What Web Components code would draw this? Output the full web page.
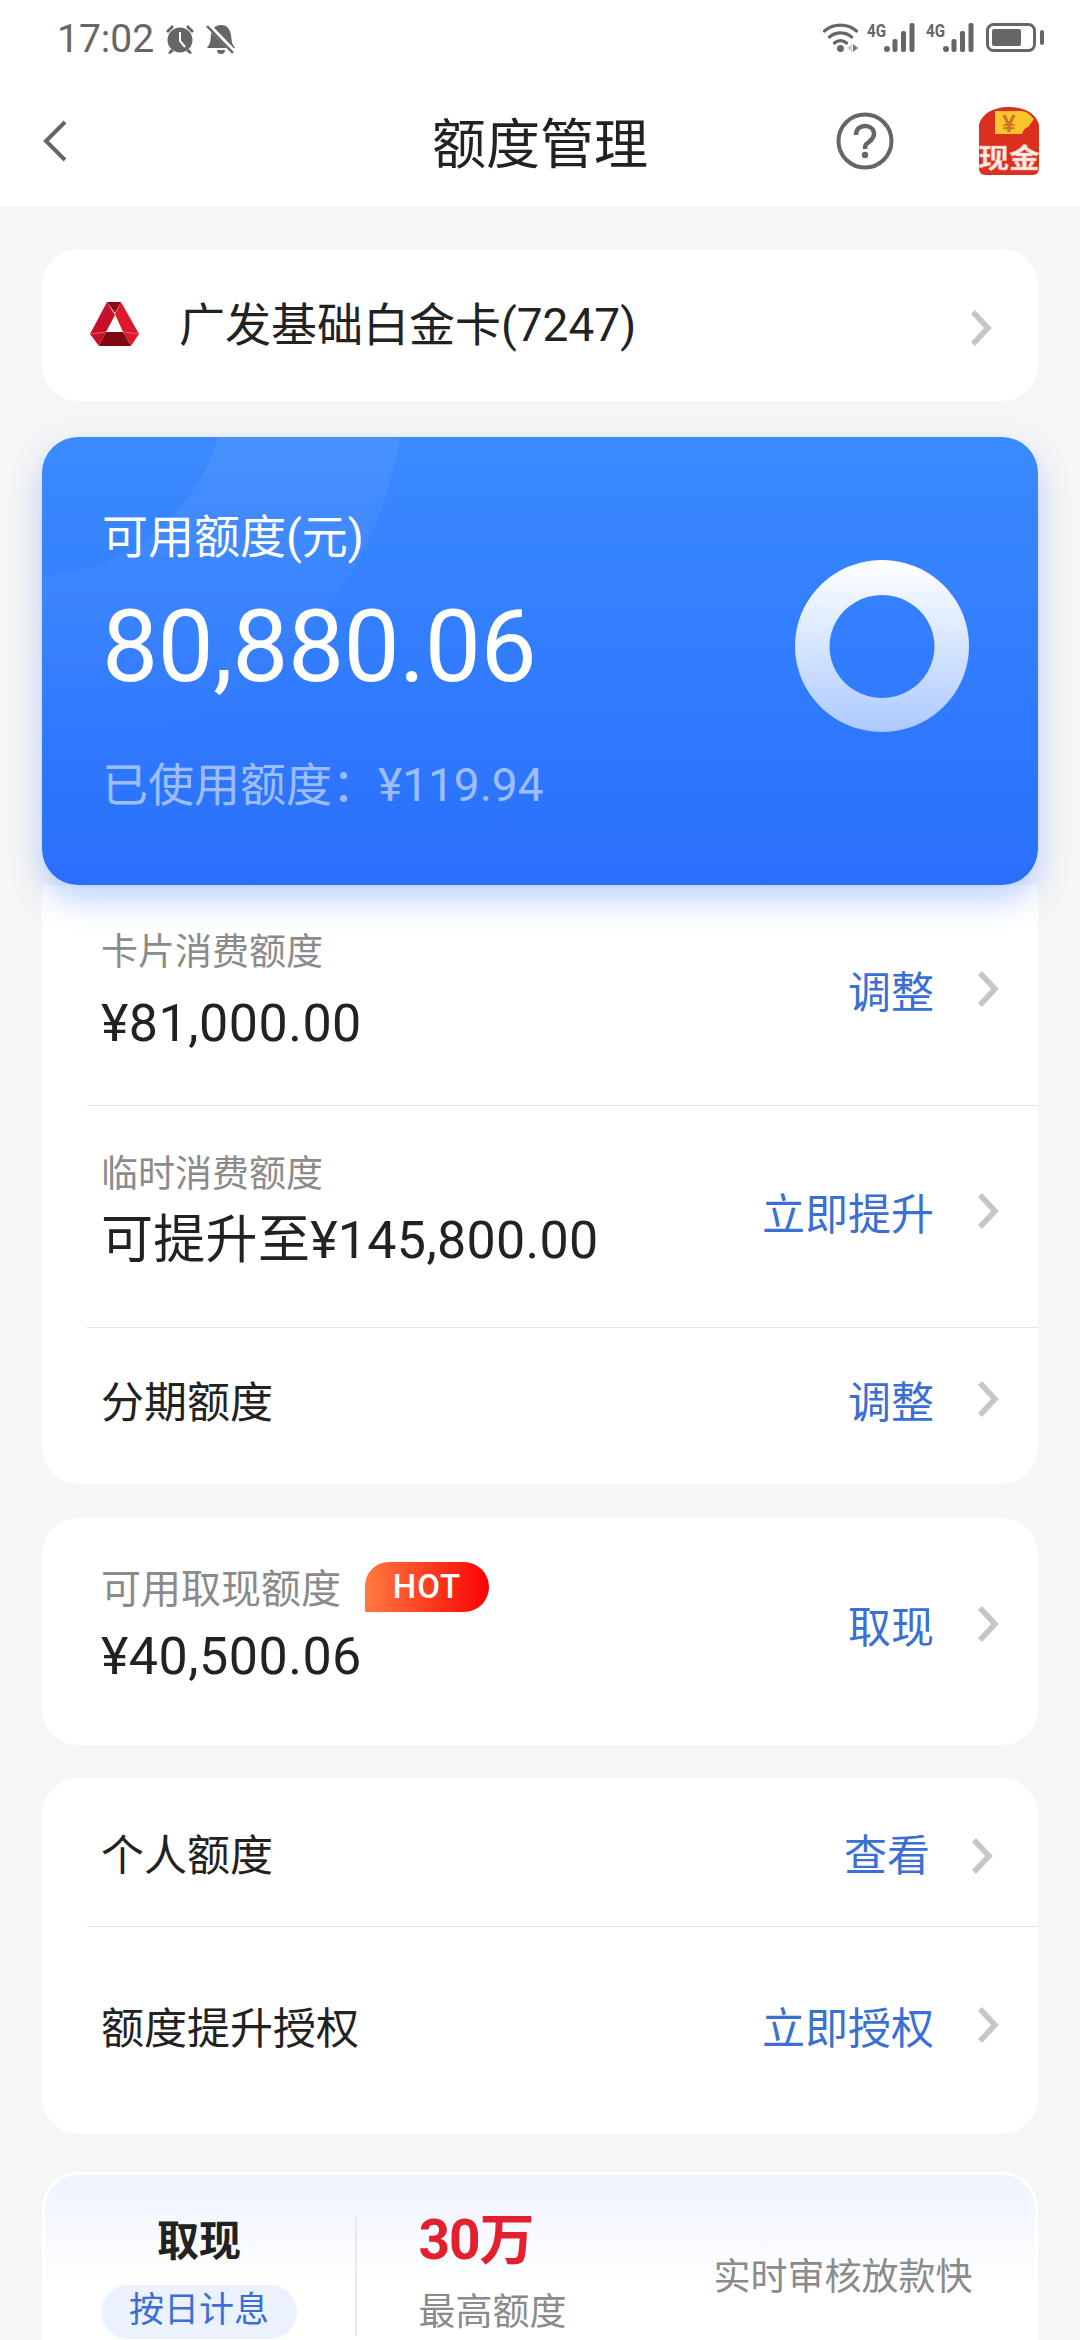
<!DOCTYPE html>
<html lang="zh"><head><meta charset="utf-8"><title>额度管理</title>
<style>
html,body{margin:0;padding:0;background:#f6f6f6}
body{width:1080px;height:2340px;overflow:hidden;font-family:Roboto,"Noto Sans CJK SC",sans-serif;color:#222}
</style></head><body>
<quota-page>
  <status-bar slot="top" time="17:02"></status-bar>
  <nav-bar slot="top" heading="额度管理"></nav-bar>
  <card-picker name="广发基础白金卡(7247)"></card-picker>
  <credit-hero label="可用额度(元)" amount="80,880.06" used="已使用额度：¥119.94"></credit-hero>
  <quota-card flat>
    <quota-row height="220" up="6" tm="5" gap="15" label="卡片消费额度" value="¥81,000.00" action="调整"></quota-row>
    <quota-row divided height="222" up="6" tm="0" gap="10" spacing="0.3" label="临时消费额度" value="可提升至¥145,800.00" action="立即提升"></quota-row>
    <quota-row divided height="157" up="7.5" title="分期额度" action="调整"></quota-row>
  </quota-card>
  <quota-card style="margin-top:34px">
    <quota-row height="227" up="7.5" tm="4.5" gap="11.5" lsize="40" label="可用取现额度" value="¥40,500.06" action="取现" hot></quota-row>
  </quota-card>
  <quota-card style="margin-top:33px">
    <quota-row height="148" chev="8" title="个人额度" action="查看" inset></quota-row>
    <quota-row divided height="208" up="6" title="额度提升授权" action="立即授权"></quota-row>
  </quota-card>
  <promo-banner></promo-banner>
</quota-page>
<script>
const CJK='Roboto,"Noto Sans CJK SC",sans-serif';
class Base extends HTMLElement{
  render(html){ if(!this.shadowRoot) this.attachShadow({mode:'open'}); this.shadowRoot.innerHTML=html; }
  a(n,d=''){ return this.hasAttribute(n)?this.getAttribute(n):d; }
}
class QuotaPage extends Base{connectedCallback(){this.render(`<style>
:host{display:flex;flex-direction:column;height:2340px;overflow:hidden}
header{background:#fff;display:flex;flex-direction:column}
main{display:flex;flex-direction:column;padding:42px 42px 0}
</style><header><slot name="top"></slot></header><main><slot></slot></main>`)}}
class StatusBar extends Base{connectedCallback(){
const g=(m)=>`<span class="g" style="margin-left:${m}px">4G</span><svg width="31" height="29" viewBox="0 0 31 29"><g fill="#666"><rect x="0" y="23" width="6" height="6" rx="3"/><rect x="8.500" y="16" width="5" height="13" rx="2"/><rect x="17" y="8" width="5" height="21" rx="2"/><rect x="25.500" y="0" width="5" height="29" rx="2"/></g></svg>`;
this.render(`<style>
:host{display:flex;align-items:center;justify-content:space-between;height:78px;padding:0 36px 0 57px;color:#666;font:400 39px Roboto,sans-serif}
.l,.r{display:flex;align-items:center}
.l{gap:9px}.l span{margin-right:1px}
.g{width:17px;font:700 16px/14px Roboto,sans-serif;align-self:flex-start;transform:scale(.95,1.15);transform-origin:0 0;white-space:nowrap}
.r{height:29px;margin-top:-3px}
</style>
<div class="l"><span>${this.a('time')}</span>
<svg width="32" height="32" viewBox="0 0 32 32"><g fill="#666"><circle cx="16" cy="17" r="12.500"/><path d="M2 8 8 2l2 2-6 6zM30 8l-6-6-2 2 6 6zM7 26l-3 4 2 1 4-3zM25 26l3 4-2 1-4-3z"/></g><path d="M16 9v9l5 6" fill="none" stroke="#fff" stroke-width="2"/></svg>
<svg width="32" height="32" viewBox="0 0 32 32"><path d="M16 2c6 0 9 4 10 10l1 8 3 5H2l3-5 1-8C7 6 10 2 16 2zM12 27h8a4 4 0 0 1-8 0z" fill="#666"/><path d="M3 2l26 27" stroke="#fff" stroke-width="5"/><path d="M2 3l26 27" stroke="#666" stroke-width="2.500"/></svg></div>
<div class="r">
<svg width="35" height="29" viewBox="0 0 35 29" fill="none"><path d="M1.500 8a25 25 0 0 1 32 0M6.500 14a17 17 0 0 1 22 0M11.500 20a9 9 0 0 1 12 0" stroke="#666" stroke-width="3.200" stroke-linecap="round"/><circle cx="17.500" cy="25.500" r="3.500" fill="#666"/><path d="M24 25l5-4v8z" fill="#ccc"/><path d="M30 21l5 4-5 4z" fill="#777"/></svg>
${g(9)}${g(11)}
<svg style="margin-left:12px" width="58" height="29" viewBox="0 0 58 29" fill="none"><rect x="1.500" y="1.500" width="47" height="26" rx="6" stroke="#666" stroke-width="3"/><rect x="6" y="6" width="29" height="17" rx="2" fill="#666"/><rect x="54" y="7" width="4" height="15" rx="2" fill="#666"/></svg>
</div>`)}}
class NavBar extends Base{connectedCallback(){this.render(`<style>
:host{display:grid;grid-template-columns:1fr auto 1fr;align-items:center;box-sizing:border-box;height:129px;padding:0 42px 4px;font:400 54px ${CJK};color:#222}
.r{display:flex;justify-content:flex-end;align-items:center;gap:82px}
svg{display:block}
</style>
<svg width="26" height="42" viewBox="0 0 26 42" fill="none"><path d="M23 2 4 21l19 19" stroke="#666" stroke-width="4"/></svg>
<div>${this.a('heading')}</div>
<div class="r">
<svg width="58" height="58" viewBox="0 0 58 58" fill="none"><circle cx="29" cy="29" r="26.500" stroke="#666" stroke-width="4"/><path d="M20 23c0-6 4-9 9-9s9 3 9 8c0 4-3 6-5 8-3 2-4 3-4 7" stroke="#666" stroke-width="4.500"/><circle cx="29" cy="43" r="3.200" fill="#666"/></svg>
<svg width="66" height="68" viewBox="0 0 66 68" style="margin-right:-4px"><path d="M3 18C5 8 16 0 33 0s28 8 30 18v44a6 6 0 0 1-6 6H9a6 6 0 0 1-6-6z" fill="#d9301f"/><path d="M19 4h25c7 0 10 4 14 8l-6 8c-3 1-5 3-6 7H19z" fill="#f8c62c"/><text x="33" y="25" text-anchor="middle" font-size="24" font-weight="700" fill="#d2702a" font-family="Liberation Sans,sans-serif">¥</text><text transform="scale(1.14,1)" x="29" y="61" text-anchor="middle" font-size="27" font-weight="700" fill="#fdeee8" stroke="#f4a898" stroke-width=".5" font-family="Noto Sans CJK SC,sans-serif">现金</text></svg>
</div>`)}}
class Chevron extends Base{connectedCallback(){this.render(`<style>:host{display:block;width:22px;height:36px}svg{display:block}</style><svg width="22" height="36" viewBox="0 0 22 36" fill="none"><path d="M3 2l15 16L3 34" stroke="#c6c6c6" stroke-width="5.500"/></svg>`)}}
class CardPicker extends Base{connectedCallback(){this.render(`<style>
:host{display:flex;align-items:center;height:152px;padding:0 46px 0 48px;background:#fff;border-radius:36px;font:400 46px ${CJK};color:#222;box-sizing:border-box}
svg{display:block;margin-right:39px;margin-top:-2px;flex:none}
span{flex:1;margin-top:-9px}
ui-chevron{margin-top:6px}
</style>
<svg width="50" height="44" viewBox="0 0 50 44"><polygon points="31,0 49,32 41,44 33,30 25,12" fill="#dc1a2c"/><polygon points="17,0 25,13 16,30 9,44 0,32" fill="#c5122a"/><polygon points="17,0 31,0 25,11" fill="#8d0a15"/><polygon points="16,30 33,30 41,44 9,44" fill="#7d0811"/><polygon points="25,20 33,30 16,30" fill="#fff"/><path d="M0 32 16 30M49 32 33 30" stroke="#f25a62" stroke-width="1"/></svg>
<span>${this.a('name')}</span><ui-chevron></ui-chevron>`)}}
class CreditHero extends Base{connectedCallback(){this.render(`<style>
:host{display:flex;align-items:flex-start;justify-content:space-between;position:relative;z-index:1;height:448px;margin-top:36px;padding:72px 69px 0 60px;box-sizing:border-box;border-radius:36px;color:#fff;
background:linear-gradient(#3a8aff,#2a6ffc);box-shadow:0 14px 32px rgba(43,112,251,.32);font-family:${CJK}}
.decor{position:absolute;inset:0;border-radius:36px;overflow:hidden}
.decor svg{position:absolute;left:0;top:0}
.txt{position:relative;display:flex;flex-direction:column}
.lab{font-size:46px;line-height:56px;height:56px}
.amt{font-size:100px;line-height:110px;margin-top:27px;letter-spacing:-.6px}
.use{font-size:46px;line-height:56px;margin-top:55px;color:rgba(255,255,255,.55)}
.ring{position:relative;display:block;margin-top:51px}
</style>
<div class="decor"><svg width="996" height="448" viewBox="0 0 996 448"><defs>
<linearGradient id="d" x1="0" y1="0" x2="0" y2="1"><stop offset="0" stop-color="#fff" stop-opacity=".16"/><stop offset="1" stop-color="#fff" stop-opacity="0"/></linearGradient></defs>
<path fill-rule="evenodd" fill="url(#d)" d="M-12-431a374 374 0 1 0 .01 0zM-12-254a197 197 0 1 0 .01 0z"/></svg></div>
<div class="txt"><div class="lab">${this.a('label')}</div><div class="amt">${this.a('amount')}</div><div class="use">${this.a('used')}</div></div>
<svg class="ring" width="174" height="172" viewBox="0 0 174 172"><defs><linearGradient id="r" x1="0" y1="0" x2="0" y2="1"><stop offset="0" stop-color="#fff"/><stop offset="1" stop-color="#fff" stop-opacity=".6"/></linearGradient></defs>
<path fill="url(#r)" fill-rule="evenodd" d="M87 0a87 86 0 1 0 .01 0zM87 35a52.500 51.500 0 1 1-.01 0z"/></svg>`)}}
class QuotaCard extends Base{connectedCallback(){const flat=this.hasAttribute('flat');this.render(`<style>
:host{display:flex;flex-direction:column;background:#fff;border-radius:${flat?'0 0 36px 36px':'36px'}}
</style><slot></slot>`)}}
class QuotaRow extends Base{connectedCallback(){
const label=this.a('label'),title=this.a('title'),hot=this.hasAttribute('hot'),inset=this.hasAttribute('inset'),div=this.hasAttribute('divided');
this.render(`<style>
:host{display:block;box-sizing:border-box;height:${this.a('height')}px;margin-left:${div?45:0}px;
${div?'border-top:1.5px solid #e6e6e6;':''}font-family:${CJK}}
.in{box-sizing:border-box;height:100%;display:flex;align-items:center;padding:0 ${inset?45:39}px ${this.a('up','0')*2}px ${div?14:59}px}
.t{flex:1;display:flex;flex-direction:column;margin-top:${this.a('tm','0')}px}
.lb{display:flex;align-items:center;font-size:${this.a('lsize','37')}px;line-height:50px;color:#8b8b8b}
.v{font-size:52px;line-height:62px;color:#222;margin-top:${this.a('gap','4')}px;letter-spacing:${this.a('spacing','.5')}px}
.title{font-size:43px;color:#222}
.hot{display:inline-block;width:124px;height:50px;margin:-6px 0 0 24px;text-align:center;color:#fff;font:500 33px/50px Roboto,sans-serif;letter-spacing:1px;border-radius:24px 25px 25px 0;background:linear-gradient(90deg,#ff7a40,#fa0303)}
.act{font-size:43px;color:#3b6fd4;margin-right:${inset?41:43}px}
ui-chevron{margin-top:${this.a('chev','0')}px}
</style><div class="in"><div class="t">${label?`<div class="lb"><span>${label}</span>${hot?'<span class="hot">HOT</span>':''}</div><div class="v">${this.a('value')}</div>`:`<div class="title">${title}</div>`}</div>
<div class="act">${this.a('action')}</div><ui-chevron></ui-chevron></div>`)}}
class PromoBanner extends Base{connectedCallback(){this.render(`<style>
:host{display:flex;box-sizing:border-box;height:240px;margin-top:38px;border:3px solid #fff;border-radius:36px;background:linear-gradient(#eef3fe,#fff 110px);font-family:${CJK};flex:none}
.a{width:308px;margin-right:2px;display:flex;flex-direction:column;align-items:center;padding-top:32px;box-sizing:border-box}
.a b{font-size:42px;font-weight:700;line-height:70px;color:#222}
.pill{margin-top:8px;width:196px;height:54px;border-radius:27px;background:#ecf2fd;color:#3b6fd4;font-size:35px;line-height:52px;text-align:center}
.div{width:1.5px;height:121px;margin-top:40px;background:#e8e8ee}
.b{padding:27px 0 0 62px;width:296px;box-sizing:border-box}
.b b{display:block;font-size:55px;font-weight:700;line-height:76px;color:#e4202e;letter-spacing:-1px}
.b span{display:block;font-size:37px;line-height:60px;margin-top:5px;color:#8b8b8b}
.c{font-size:37px;line-height:50px;color:#8b8b8b;padding-top:78px;margin-left:61px}
</style>
<div class="a"><b>取现</b><div class="pill">按日计息</div></div><div class="div"></div>
<div class="b"><b>30万</b><span>最高额度</span></div><div class="c">实时审核放款快</div>`)}}
customElements.define('ui-chevron',Chevron);
customElements.define('quota-page',QuotaPage);
customElements.define('status-bar',StatusBar);
customElements.define('nav-bar',NavBar);
customElements.define('card-picker',CardPicker);
customElements.define('credit-hero',CreditHero);
customElements.define('quota-card',QuotaCard);
customElements.define('quota-row',QuotaRow);
customElements.define('promo-banner',PromoBanner);
</script>
</body></html>
